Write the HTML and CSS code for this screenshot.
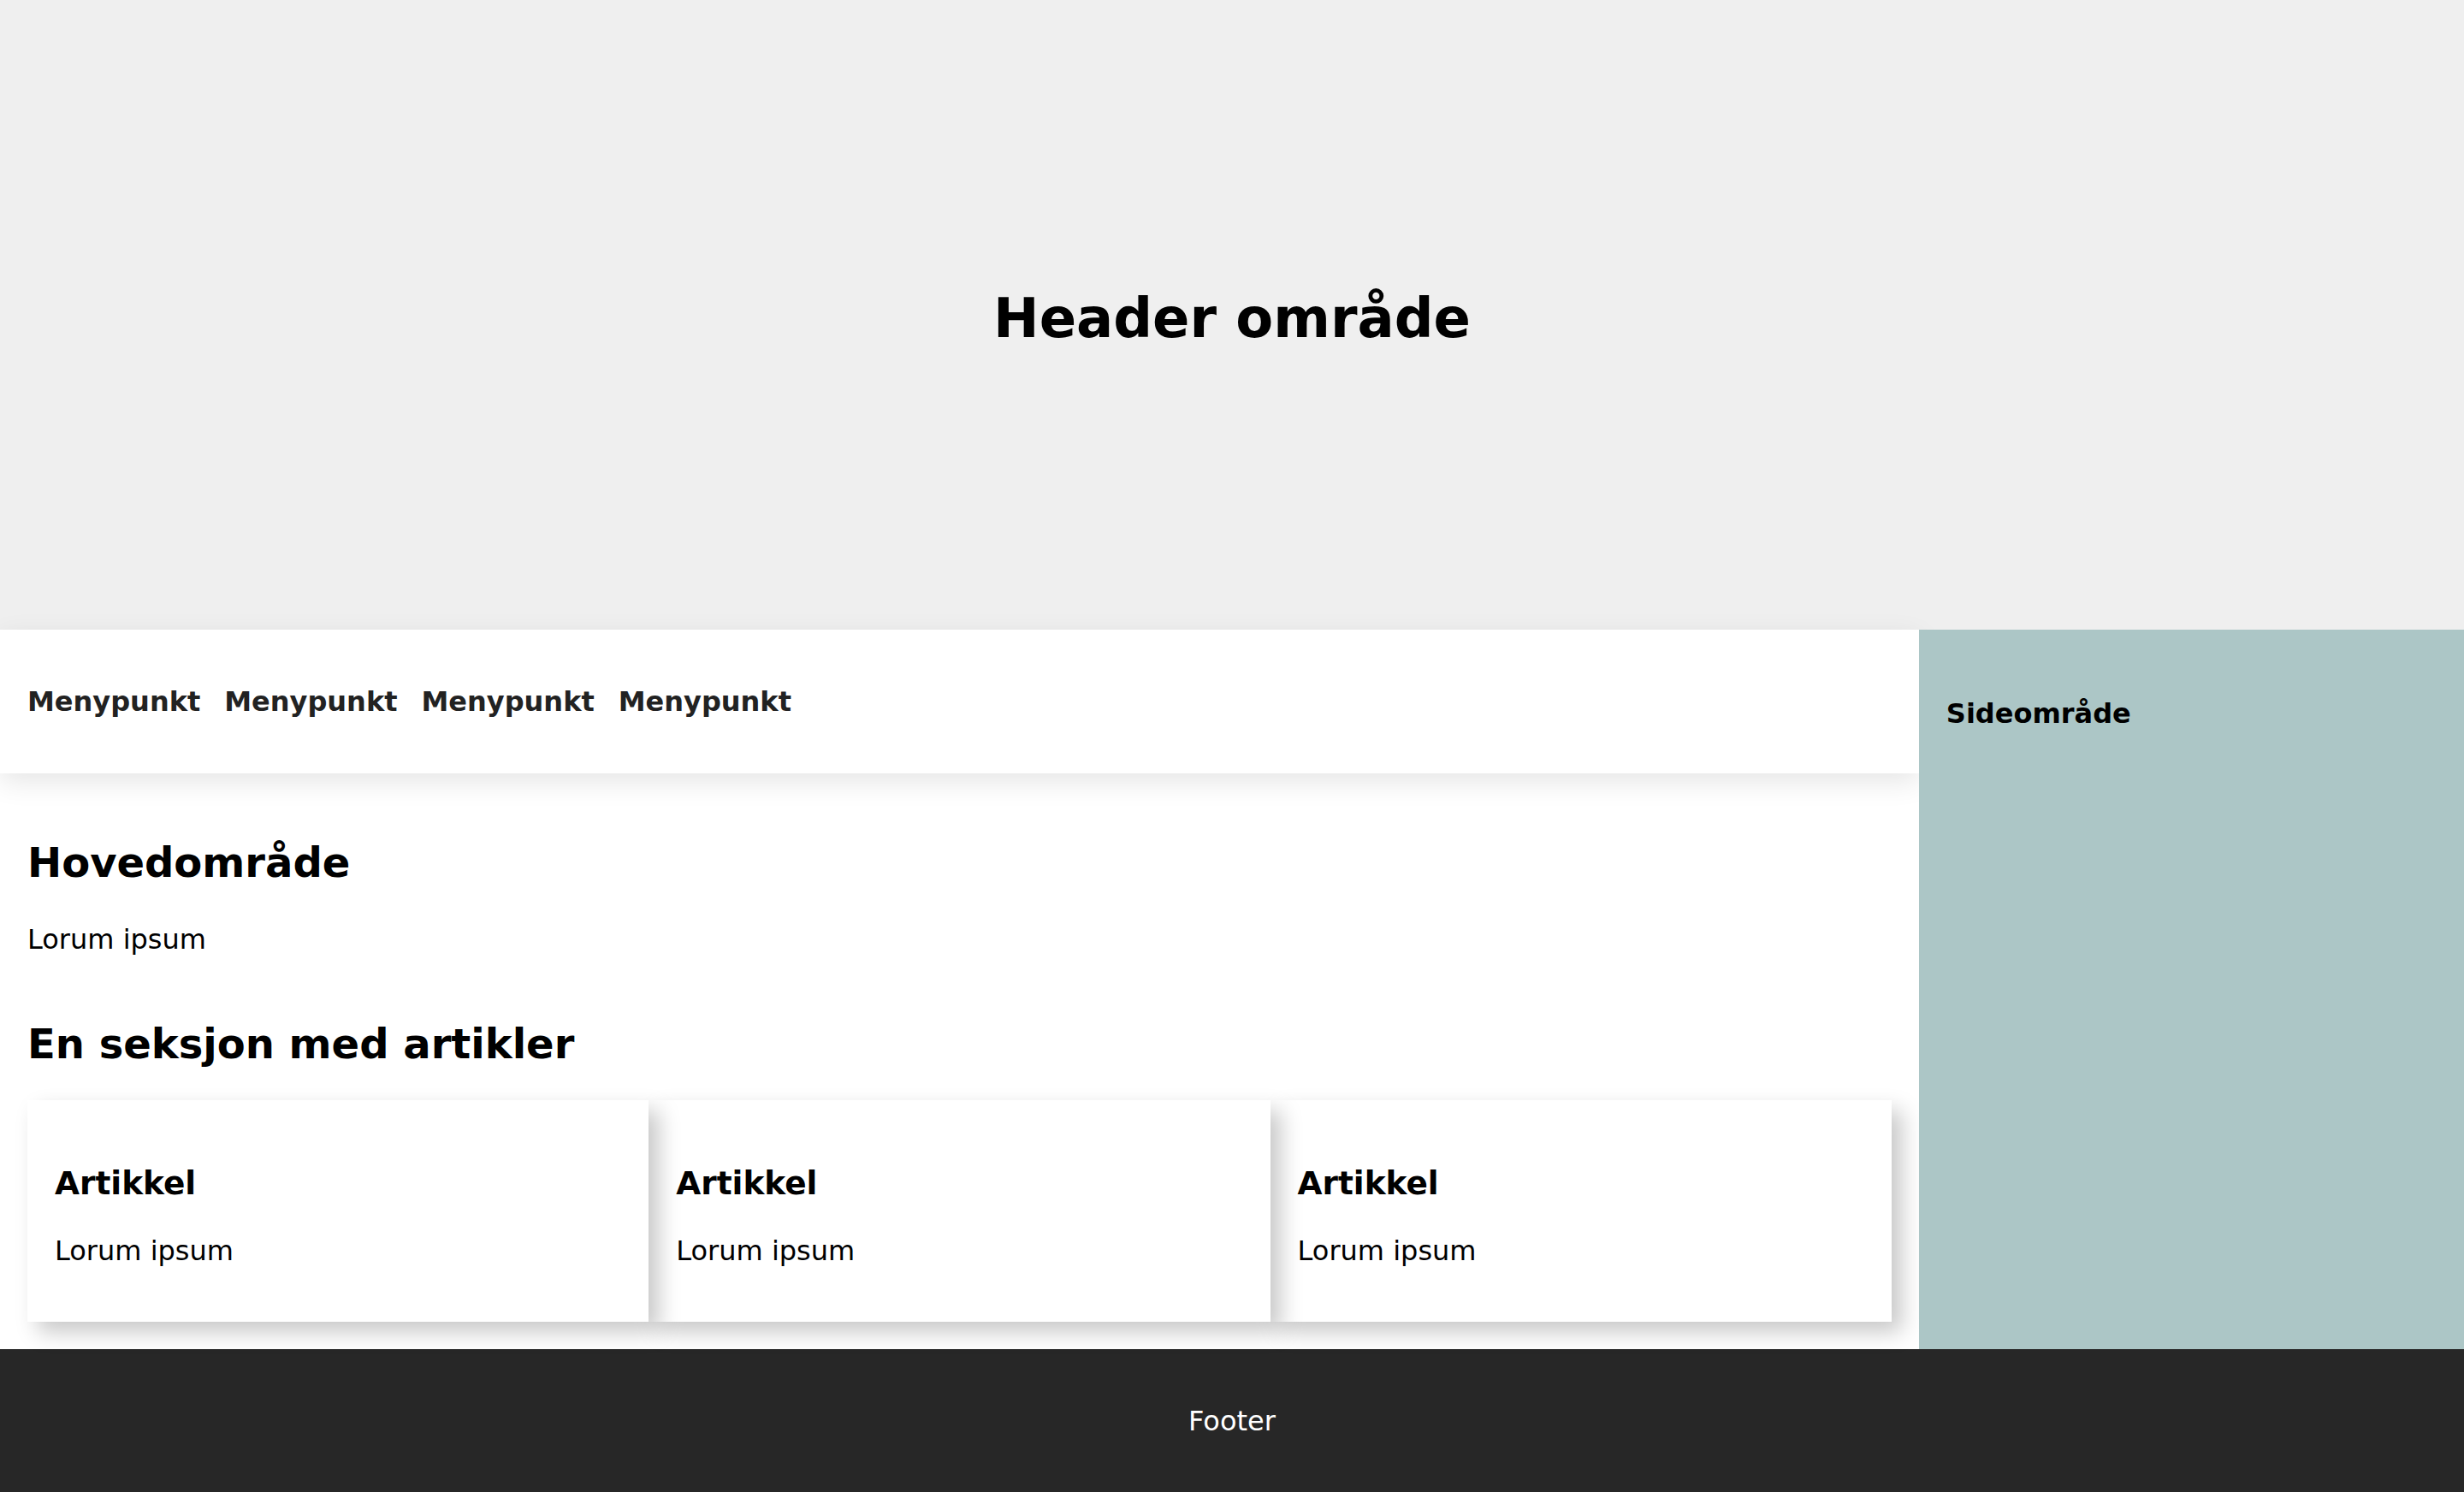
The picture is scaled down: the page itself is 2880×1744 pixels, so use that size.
FILE: index.html
```html
<!DOCTYPE html>
<html lang="no">
<head>
<meta charset="utf-8">
<title>Layout</title>
<link rel="stylesheet" href="styles.css">
</head>
<body>
<header class="site-header">
  <h1 class="site-title">Header område</h1>
</header>
<div class="layout">
  <div class="primary">
    <nav class="menu">
      <ul class="menu-list">
        <li class="menu-item">Menypunkt</li>
        <li class="menu-item">Menypunkt</li>
        <li class="menu-item">Menypunkt</li>
        <li class="menu-item">Menypunkt</li>
      </ul>
    </nav>
    <main class="main">
      <h2 class="main-title">Hovedområde</h2>
      <p class="main-text">Lorum ipsum</p>
      <section class="articles">
        <h2 class="section-title">En seksjon med artikler</h2>
        <div class="cards">
          <article class="card">
            <h3 class="card-title">Artikkel</h3>
            <p class="card-text">Lorum ipsum</p>
          </article>
          <article class="card">
            <h3 class="card-title">Artikkel</h3>
            <p class="card-text">Lorum ipsum</p>
          </article>
          <article class="card">
            <h3 class="card-title">Artikkel</h3>
            <p class="card-text">Lorum ipsum</p>
          </article>
        </div>
      </section>
    </main>
  </div>
  <aside class="sidebar">
    <h4 class="sidebar-title">Sideområde</h4>
  </aside>
</div>
<footer class="site-footer">Footer</footer>
</body>
</html>
```
FILE: styles.css
```css
* {
  box-sizing: border-box;
}

html, body {
  margin: 0;
  padding: 0;
}

body {
  font-family: "DejaVu Sans", Verdana, sans-serif;
  font-size: 32px;
  line-height: normal;
  color: #000;
  background: #fff;
}

.site-header {
  height: 736px;
  padding-top: 8px;
  background: #efefef;
  display: flex;
  align-items: center;
  justify-content: center;
}

.site-title {
  margin: 0;
  font-size: 64px;
  font-weight: bold;
}

.layout {
  display: grid;
  grid-template-columns: minmax(0, 3.52fr) minmax(0, 1fr);
}

.primary {
  display: flex;
  flex-direction: column;
}

.menu {
  height: 168px;
  display: flex;
  align-items: center;
  padding: 0 32px;
  background: #fff;
  box-shadow: 0 10px 30px rgba(0, 0, 0, 0.1);
}

.menu-list {
  list-style: none;
  margin: 0;
  padding: 0;
  display: flex;
  gap: 28px;
}

.menu-item {
  font-weight: bold;
  color: #222;
}

.main {
  padding: 32px 32px 32px 32px;
  flex: 1;
}

.main-title {
  margin: 44px 0 0;
  font-size: 48px;
}

.main-text {
  margin: 43px 0 0;
}

.section-title {
  margin: 75px 0 0;
  font-size: 48px;
}

.cards {
  margin-top: 38px;
  display: grid;
  grid-template-columns: repeat(3, minmax(0, 1fr));
}

.card {
  position: relative;
  background: #fff;
  padding: 32px;
  box-shadow: 12px 12px 24px rgba(0, 0, 0, 0.22);
}

.card:nth-child(1) {
  z-index: 3;
}

.card:nth-child(2) {
  z-index: 2;
}

.card:nth-child(3) {
  z-index: 1;
}

.card-title {
  margin: 43px 0 0;
  font-size: 37.44px;
}

.card-text {
  margin: 38px 0 32px;
}

.sidebar {
  position: relative;
  z-index: 5;
  background: #acc6c6;
  padding: 32px;
}

.sidebar-title {
  margin: 47px 0 0;
  font-size: 32px;
  font-weight: bold;
}

.site-footer {
  height: 168px;
  background: #272727;
  color: #fff;
  display: flex;
  align-items: center;
  justify-content: center;
}
```
